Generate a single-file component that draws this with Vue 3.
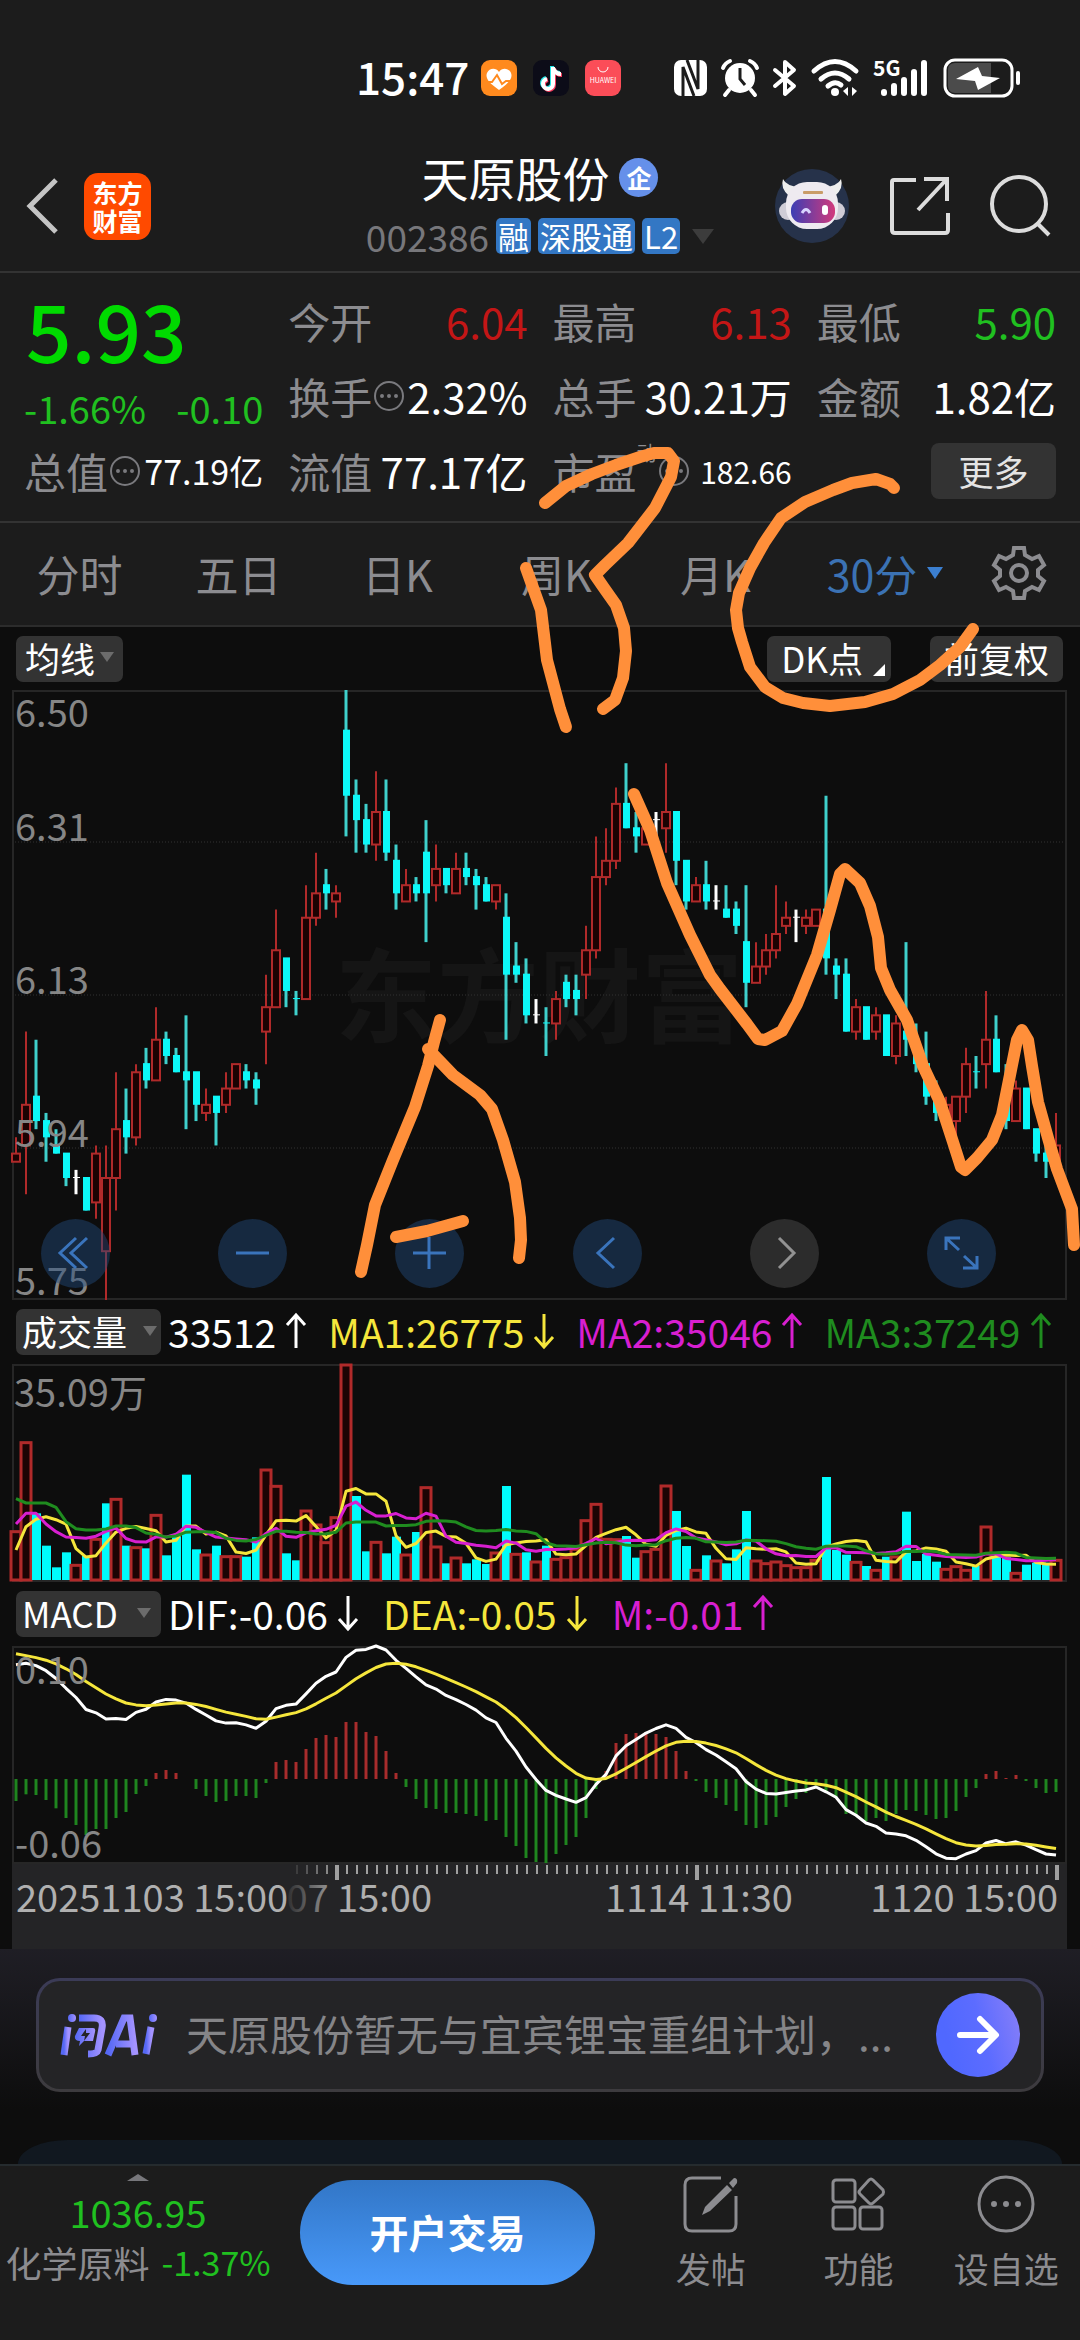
<script setup>
import { ref, computed } from 'vue'

const activeTab = ref('30分')
const tabs = ['分时', '五日', '日K', '周K', '月K', '30分']
const tags = ['融', '深股通', 'L2']

// x of a bar inside a plot
const barX = (i) => 4 + i * 10

// [kind, high, body top, body bottom, low], in cents below 6.50
// r = up, c = down, w = unchanged
const candles = [
    ['r', 55, 57, 58, 58], ['r', 42, 51, 56, 62], ['c', 43, 50, 53, 54], ['c', 52, 53, 55, 58], ['c', 54, 56, 57, 57],
    ['c', 57, 57, 60, 61], ['w', 59, 60, 60, 62], ['c', 60, 60, 64, 64], ['r', 56, 57, 63, 65], ['r', 56, 60, 69, 75],
    ['r', 47, 54, 60, 64], ['c', 49, 53, 55, 57], ['r', 46, 47, 55, 56], ['c', 44, 46, 48, 49], ['r', 39, 43, 48, 48],
    ['c', 42, 43, 45, 46], ['c', 44, 45, 47, 47], ['c', 40, 47, 48, 54], ['c', 47, 47, 51, 53], ['r', 49, 51, 52, 53],
    ['c', 50, 50, 52, 56], ['r', 47, 49, 51, 52], ['r', 46, 46, 49, 49], ['c', 46, 47, 48, 49], ['c', 47, 48, 49, 51],
    ['r', 35, 39, 42, 46], ['r', 27, 32, 39, 39], ['c', 33, 33, 37, 39], ['c', 37, 38, 38, 40], ['r', 24, 28, 38, 38],
    ['r', 20, 25, 28, 29], ['c', 22, 24, 25, 27], ['r', 24, 25, 26, 28], ['c', 0, 5, 13, 18], ['c', 11, 13, 16, 20],
    ['c', 14, 16, 19, 20], ['r', 10, 15, 19, 21], ['c', 11, 15, 20, 21], ['c', 19, 21, 25, 27], ['r', 22, 24, 26, 26],
    ['c', 23, 24, 25, 26], ['c', 16, 20, 25, 31], ['r', 19, 22, 24, 26], ['c', 22, 22, 24, 25], ['r', 20, 22, 25, 25],
    ['c', 20, 22, 23, 24], ['c', 22, 23, 24, 27], ['c', 23, 24, 26, 26], ['r', 24, 24, 26, 27], ['c', 25, 28, 35, 43],
    ['c', 31, 34, 35, 36], ['c', 33, 35, 40, 41], ['w', 38, 40, 40, 41], ['c', 39, 41, 41, 45], ['r', 37, 38, 41, 43],
    ['c', 35, 36, 38, 39], ['c', 35, 37, 38, 40], ['r', 29, 32, 35, 38], ['r', 18, 23, 32, 33], ['r', 17, 21, 23, 24],
    ['r', 12, 14, 21, 22], ['c', 9, 14, 17, 17], ['c', 15, 17, 18, 20], ['r', 16, 17, 19, 19], ['w', 15, 16, 16, 18],
    ['r', 9, 15, 17, 20], ['c', 15, 15, 21, 24], ['c', 21, 21, 26, 27], ['r', 23, 24, 26, 26], ['c', 21, 24, 26, 27],
    ['w', 24, 26, 26, 27], ['c', 24, 27, 28, 28], ['c', 26, 27, 29, 30], ['c', 24, 31, 36, 39], ['r', 31, 34, 36, 36],
    ['r', 30, 32, 34, 35], ['r', 24, 30, 32, 33], ['r', 26, 28, 29, 30], ['w', 27, 28, 28, 31], ['r', 27, 28, 29, 30],
    ['r', 27, 27, 29, 29], ['c', 13, 27, 33, 35], ['c', 33, 34, 35, 38], ['c', 33, 35, 42, 42], ['r', 38, 39, 42, 43],
    ['c', 39, 39, 43, 43], ['r', 39, 40, 42, 43], ['c', 40, 40, 45, 45], ['r', 40, 41, 45, 46], ['c', 31, 42, 43, 45],
    ['c', 41, 43, 46, 47], ['c', 42, 46, 50, 51], ['c', 48, 50, 52, 53], ['r', 50, 51, 53, 53], ['r', 50, 50, 53, 55],
    ['r', 44, 46, 50, 52], ['c', 45, 47, 47, 49], ['r', 37, 43, 46, 49], ['c', 40, 43, 47, 47], ['c', 46, 48, 53, 54],
    ['r', 48, 49, 53, 53], ['c', 49, 49, 54, 54], ['c', 54, 54, 57, 58], ['c', 56, 57, 58, 60], ['r', 52, 56, 58, 58]
]
const priceY = (cents) => cents * 610 / 75
const candleShapes = computed(() => candles.map(([kind, high, top, bottom, low], i) => ({
    kind,
    x: barX(i),
    high: priceY(high),
    top: priceY(top),
    bottom: priceY(bottom),
    low: priceY(low)
})))
const priceLabels = [
    { text: '6.50', y: 37 },
    { text: '6.31', y: 151 },
    { text: '6.13', y: 304 },
    { text: '5.94', y: 457 },
    { text: '5.75', y: 605 }
]

// volumes before the first visible bar, needed by the averages
const history = [675, 200, 103, 298, 943, 467, 152, 125, 170, 67, 95, 200, 423, 268, 244, 65, 90, 63, 84]
const volumes = [
    148, 415, 200, 103, 38, 83, 47, 72, 125, 230, 245, 103, 100, 95, 197, 74, 130, 316, 92, 78, 103,
    73, 73, 70, 128, 333, 284, 80, 59, 210, 168, 115, 190, 648, 252, 86, 116, 80, 130, 78, 144, 280,
    102, 50, 69, 50, 62, 48, 84, 282, 80, 83, 57, 103, 65, 70, 95, 181, 230, 125, 124, 132, 67, 88,
    95, 285, 207, 102, 32, 74, 60, 50, 92, 207, 60, 52, 57, 46, 40, 40, 62, 309, 90, 76, 56, 42, 32,
    70, 72, 205, 57, 78, 55, 35, 43, 32, 43, 162, 72, 68, 23, 46, 52, 52, 62
]
// one letter per bar, ten bars per group
const volumeKinds = [
    'rrccccrcrc', 'rcrcrccccr', 'crrccrrccr', 'rrrrccrccr', 'crrcrcccrc',
    'rcrcrrrrrr', 'rccrrrccrc', 'rcccrrrrrr', 'rcccrcrcrc', 'cccrrrcrcc', 'rcccr'
].join('')
const volumeBars = computed(() => volumes.map((v, i) => ({
    kind: volumeKinds[i],
    x: barX(i),
    h: v / 3
})))
const toLine = (values, toY) => values.map((v, i) => barX(i) + ',' + toY(v).toFixed(1)).join(' ')
const average = (days) => {
    const all = history.concat(volumes)
    const values = volumes.map((_, i) => {
        const end = i + history.length + 1
        return all.slice(end - days, end).reduce((sum, v) => sum + v, 0) / days
    })
    return toLine(values, (v) => 216 - v / 3)
}
const ma5 = average(5)
const ma10 = average(10)
const ma20 = average(20)

// MACD histogram, DIF and DEA follow from it
const macd = [
    -66, -46, -48, -63, -88, -117, -138, -168, -150, -150, -117, -99, -45, -21, 18, 27, 18, 0, -30, -51, -69,
    -66, -51, -51, -57, -12, 51, 57, 51, 90, 123, 132, 126, 171, 171, 141, 129, 84, 18, -24, -60, -87,
    -90, -102, -102, -105, -111, -126, -123, -174, -201, -237, -249, -252, -225, -198, -174, -117, -30, 24, 108, 135, 138,
    141, 135, 126, 84, 24, -6, -39, -57, -78, -96, -138, -147, -138, -114, -84, -60, -42, -20, -39, -57, -105,
    -111, -126, -117, -126, -105, -93, -96, -108, -120, -117, -96, -54, -27, 15, 24, 3, 12, -6, -27, -42, -39
]
const dea = []
macd.forEach((m, i) => dea.push(i ? dea[i - 1] + m / 8 : 376))
const dif = dea.map((d, i) => d + macd[i] / 2)
const macdY = (v) => 133 - v / 3
const difLine = toLine(dif, macdY)
const deaLine = toLine(dea, macdY)

const ticks = Array.from({ length: 77 }, (_, n) => n + 28)
const tickOpacity = (i) => Math.min(1, (i - 27) / 5)

const volumeStats = [
    { text: '33512', up: true, color: 'white' },
    { text: 'MA1:26775', up: false, color: 'yellow' },
    { text: 'MA2:35046', up: true, color: 'magenta' },
    { text: 'MA3:37249', up: true, color: 'green' }
]
const macdStats = [
    { text: 'DIF:-0.06', up: false, color: 'white' },
    { text: 'DEA:-0.05', up: false, color: 'yellow' },
    { text: 'M:-0.01', up: true, color: 'magenta' }
]

const controls = [
    { name: '最左', path: 'M35 19L19 34L35 49M46 19L30 34L46 49' },
    { name: '缩小', path: 'M18 34H51' },
    { name: '放大', path: 'M18 34H51M34 18V50' },
    { name: '左移', path: 'M41 19L25 34L41 49' },
    { name: '右移', path: 'M29 19L44 34L29 49', off: true },
    { name: '全屏', path: 'M19 31V19H33M19 19L32 31M50 37V49H36M50 49L37 37' }
]

// hand-drawn marks on top of the page
const marks = [
    '526,568 541,610 547,660 560,709 566,727',
    '545,503 566,486 592,474 616,465 640,457 654,453 668,453 674,461 671,477 655,508 628,543 605,565 595,575 604,588 616,605 624,628 626,651 623,678 615,700 603,709',
    '894,488 890,484 876,479 852,483 833,490 805,502 781,518 764,543 750,568 739,593 736,610 738,628 742,642 750,667 765,687 783,698 803,703 830,706 865,702 893,694 920,680 940,665 960,647 973,629',
    '440,1020 434,1042 428,1066 415,1107 393,1160 375,1205 367,1245 361,1272',
    '428,1049 453,1075 480,1095 492,1109 503,1140 515,1182 520,1218 521,1240 519,1258',
    '396,1237 427,1231 463,1221',
    '634,794 650,830 667,883 690,935 710,975 720,989 747,1024 758,1039 765,1040 782,1031 797,1004 817,955 830,910 840,874 845,869 860,883 870,906 878,937 881,968 890,990 907,1020 923,1066 940,1102 953,1142 961,1167 965,1170 977,1158 992,1140 1002,1115 1010,1075 1017,1040 1022,1030 1028,1040 1032,1066 1038,1102 1048,1138 1057,1169 1072,1209 1074,1245'
]
</script>

<template>
    <div class="page">
        <!-- Phone status bar -->
        <div class="status">
            <div class="status-left">
                <span class="clock">15:47</span>
                <svg width="36" height="36" viewBox="0 0 36 36">
                    <rect width="36" height="36" rx="9" fill="#ff8a1e" />
                    <path d="M18 30C8 23 4 18 6 13C8 8 15 7 18 12C21 7 28 8 30 13C32 18 28 23 18 30Z" fill="#fff" />
                    <path d="M3 22H11L16 15L21 24L25 21H33" fill="none" stroke="#ff8a1e" stroke-width="2" />
                </svg>
                <svg width="36" height="36" viewBox="0 0 36 36">
                    <rect width="36" height="36" rx="9" fill="#0c0c18" />
                    <g fill="none" stroke-width="4">
                        <path d="M19 6V23A5 5 0 1 1 13 18M19 7Q21 13 27 13" stroke="#25e5e8" />
                        <path d="M21 8V25A5 5 0 1 1 15 20M21 9Q23 15 29 15" stroke="#f53a5c" />
                        <path d="M20 7V24A5 5 0 1 1 14 19M20 8Q22 14 28 14" stroke="#fff" />
                    </g>
                </svg>
                <svg width="36" height="36" viewBox="0 0 36 36">
                    <rect width="36" height="36" rx="9" fill="#fb4d58" />
                    <path d="M13 7A5 5 0 0 0 23 7" fill="none" stroke="#fff" stroke-width="1" />
                    <text x="18" y="23" font-size="7" fill="#fff" text-anchor="middle">HUAWEI</text>
                </svg>
            </div>
            <div class="status-right">
                <svg width="33" height="36" viewBox="0 0 33 36">
                    <rect width="33" height="36" rx="7" fill="#fff" />
                    <path d="M9 36V7L20 36M24 0V29L13 0" fill="none" stroke="#1c1c1c" stroke-width="3" />
                </svg>
                <svg width="38" height="38" viewBox="0 0 38 38">
                    <circle cx="19" cy="19" r="15" fill="#fff" />
                    <path d="M19 9V20L24 26" fill="none" stroke="#1c1c1c" stroke-width="3" />
                    <path d="M2 9Q4 4 9 2M36 9Q34 4 29 2M8 31L4 36M30 31L34 36" fill="none" stroke="#fff" stroke-width="4" stroke-linecap="round" />
                </svg>
                <svg width="24" height="38" viewBox="0 0 24 38">
                    <path d="M2 11L21 27L12 35V3L21 11L2 27" fill="none" stroke="#fff" stroke-width="4" stroke-linejoin="round" stroke-linecap="round" />
                </svg>
                <svg width="48" height="38" viewBox="0 0 48 38">
                    <g fill="none" stroke="#fff" stroke-width="5" stroke-linecap="round">
                        <path d="M3 12Q24 -7 45 12" />
                        <path d="M10 20Q24 8 38 20" />
                        <path d="M17 27Q24 21 30 26" />
                    </g>
                    <circle cx="24" cy="33" r="4" fill="#fff" />
                    <path d="M37 28V37L32 32ZM41 37V28L46 32Z" fill="#fff" />
                </svg>
                <svg width="56" height="38" viewBox="0 0 56 38">
                    <text x="0" y="17" font-size="21" font-weight="700" fill="#fff">5G</text>
                    <path d="M11 33V34M21 27V34M31 21V34M41 13V34M51 4V34" stroke="#fff" stroke-width="6" stroke-linecap="round" />
                </svg>
                <svg width="78" height="40" viewBox="0 0 78 40">
                    <rect x="2" y="2" width="67" height="36" rx="10" fill="#1c1c1c" stroke="#fff" stroke-width="3" />
                    <path d="M12 5H48V35H12Q5 35 5 28V12Q5 5 12 5Z" fill="#4b4b4b" />
                    <path d="M35 9L13 21L32 23L35 32L57 20L39 18Z" fill="#fff" />
                    <path d="M75 15V25" stroke="#fff" stroke-width="4" stroke-linecap="round" />
                </svg>
            </div>
        </div>

        <!-- Stock title -->
        <header class="head">
            <div class="head-side">
                <button class="plain" aria-label="返回">
                    <svg width="36" height="58" viewBox="0 0 36 58">
                        <path d="M32 3L6 29L32 55" fill="none" stroke="#c4c4c4" stroke-width="5" />
                    </svg>
                </button>
                <div class="logo"><span>东方</span><span>财富</span></div>
            </div>
            <div class="head-mid">
                <h1>天原股份<span class="corp">企</span></h1>
                <div class="code-row">
                    <span class="code">002386</span>
                    <span v-for="tag in tags" :key="tag" class="tag">{{ tag }}</span>
                    <i class="caret dark"></i>
                </div>
            </div>
            <div class="head-side right">
                <button class="plain" aria-label="助手">
                    <svg width="76" height="76" viewBox="0 0 76 76">
                        <circle cx="38" cy="38" r="37" fill="#26324a" />
                        <path d="M9 11Q6 20 15 28L26 19Q12 18 9 11ZM67 11Q70 20 61 28L50 19Q64 18 67 11Z" fill="#eee" />
                        <circle cx="14" cy="43" r="9" fill="#cfccd6" />
                        <circle cx="62" cy="43" r="9" fill="#cfccd6" />
                        <rect x="12" y="14" width="52" height="47" rx="21" fill="#eeeaf0" />
                        <rect x="29" y="23" width="20" height="3" rx="1" fill="#c99c68" />
                        <defs>
                            <linearGradient id="visor"><stop stop-color="#3c3eb4" /><stop offset="1" stop-color="#d23a7c" /></linearGradient>
                        </defs>
                        <rect x="17" y="31" width="44" height="24" rx="11" fill="url(#visor)" />
                        <path d="M28 45Q32 38 36 45" fill="none" stroke="#d8d4ff" stroke-width="3" />
                        <rect x="48" y="37" width="6" height="10" rx="3" fill="#fff" />
                    </svg>
                </button>
                <button class="plain" aria-label="分享">
                    <svg width="60" height="60" viewBox="0 0 60 60">
                        <path d="M26 4H4Q2 4 2 6V54Q2 57 5 57H55Q58 57 58 54V37M34 3H57V25M56 4L28 34" fill="none" stroke="#dcdcdc" stroke-width="4" />
                    </svg>
                </button>
                <button class="plain" aria-label="搜索">
                    <svg width="62" height="62" viewBox="0 0 62 62">
                        <circle cx="29" cy="29" r="27" fill="none" stroke="#dcdcdc" stroke-width="4" />
                        <path d="M48 49L59 60" stroke="#dcdcdc" stroke-width="4" />
                    </svg>
                </button>
            </div>
        </header>

        <!-- Quote figures -->
        <section class="quote">
            <div class="quote-main">
                <strong class="price">5.93</strong>
                <div class="change"><span>-1.66%</span><span>-0.10</span></div>
            </div>
            <div class="cell"><span class="label">今开</span><b class="red">6.04</b></div>
            <div class="cell"><span class="label">最高</span><b class="red">6.13</b></div>
            <div class="cell"><span class="label">最低</span><b class="green">5.90</b></div>
            <div class="cell">
                <span class="label">换手<svg class="info" width="30" height="30" viewBox="0 0 30 30"><circle cx="15" cy="15" r="14" /><path d="M8 15H8M15 15H15M22 15H22" /></svg></span>
                <b>2.32%</b>
            </div>
            <div class="cell"><span class="label">总手</span><b>30.21万</b></div>
            <div class="cell"><span class="label">金额</span><b>1.82亿</b></div>
            <div class="cell">
                <span class="label">总值<svg class="info" width="30" height="30" viewBox="0 0 30 30"><circle cx="15" cy="15" r="14" /><path d="M8 15H8M15 15H15M22 15H22" /></svg></span>
                <b class="mid">77.19亿</b>
            </div>
            <div class="cell"><span class="label">流值</span><b>77.17亿</b></div>
            <div class="cell">
                <span class="label">市盈<sup>动</sup><svg class="info" width="30" height="30" viewBox="0 0 30 30"><circle cx="15" cy="15" r="14" /><path d="M8 15H8M15 15H15M22 15H22" /></svg></span>
                <b class="small">182.66</b>
            </div>
            <div class="cell end"><button class="more">更多</button></div>
        </section>

        <!-- Period tabs -->
        <nav class="tabs">
            <button
                v-for="tab in tabs"
                :key="tab"
                class="tab"
                :class="{ active: activeTab === tab }"
                @click="activeTab = tab"
            >{{ tab }}<i v-if="tab === '30分'" class="caret small-caret"></i></button>
            <button class="tab gear" aria-label="设置">
                <svg width="54" height="54" viewBox="0 0 54 54" fill="none" stroke="#8c8c90" stroke-width="4">
                    <path d="M22 2H32L33 9L40 13L47 10L52 19L46 24V30L52 35L47 44L40 41L33 45L32 52H22L21 45L14 41L7 44L2 35L8 30V24L2 19L7 10L14 13L21 9Z" />
                    <circle cx="27" cy="27" r="8" />
                </svg>
            </button>
        </nav>

        <main class="charts">
            <!-- Price -->
            <div class="bar">
                <label class="pill"><select aria-label="指标"><option>均线</option></select><i class="caret"></i></label>
                <div class="bar-right">
                    <button class="pill dk">DK点<i class="corner"></i></button>
                    <button class="pill fq">前复权</button>
                </div>
            </div>
            <div class="plot">
                <svg viewBox="0 0 1055 610">
                    <text x="527" y="345" class="watermark">东方财富</text>
                    <g class="grid">
                        <path d="M0 152H1055M0 305H1055M0 458H1055" />
                    </g>
                    <rect x="1" y="1" width="1053" height="608" class="frame" />
                    <g v-for="(k, i) in candleShapes" :key="i" :class="'candle-' + k.kind">
                        <template v-if="k.kind === 'r'">
                            <path :d="`M${k.x} ${k.high}V${k.top}M${k.x} ${k.bottom}V${k.low}`" />
                            <rect :x="k.x - 4" :y="k.top" width="8" :height="k.bottom - k.top" />
                        </template>
                        <template v-else>
                            <path :d="`M${k.x} ${k.high}V${k.low}`" />
                            <rect :x="k.x - 3" :y="k.top - 1" width="7" :height="k.bottom - k.top + 1" />
                        </template>
                    </g>
                    <text v-for="l in priceLabels" :key="l.text" x="3" :y="l.y" class="scale">{{ l.text }}</text>
                </svg>
                <div class="controls">
                    <button v-for="c in controls" :key="c.name" class="round" :class="{ off: c.off }" :aria-label="c.name">
                        <svg width="69" height="69" viewBox="0 0 69 69"><path :d="c.path" /></svg>
                    </button>
                </div>
            </div>

            <!-- Volume -->
            <div class="bar stats">
                <label class="pill"><select aria-label="副图一"><option>成交量</option></select><i class="caret wide"></i></label>
                <span v-for="s in volumeStats" :key="s.text" class="stat" :class="s.color">
                    {{ s.text }}
                    <svg width="20" height="36" viewBox="0 0 20 36"><path :d="s.up ? 'M10 35V2M1 12L10 2L19 12' : 'M10 1V34M1 24L10 34L19 24'" /></svg>
                </span>
            </div>
            <div class="plot">
                <svg viewBox="0 0 1055 218">
                    <rect x="1" y="1" width="1053" height="216" class="frame" />
                    <template v-for="(v, i) in volumeBars" :key="i">
                        <rect v-if="v.kind === 'r'" class="vol-r" :x="v.x - 5" :y="217 - v.h" width="10" :height="v.h - 1" />
                        <rect v-else class="vol-c" :x="v.x - 4" :y="216 - v.h" width="9" :height="v.h" />
                    </template>
                    <polyline :points="ma5" class="line yellow" />
                    <polyline :points="ma10" class="line magenta" />
                    <polyline :points="ma20" class="line green" />
                    <text x="2" y="43" class="scale">35.09万</text>
                </svg>
            </div>

            <!-- MACD -->
            <div class="bar stats macd-stats">
                <label class="pill"><select aria-label="副图二"><option>MACD</option></select><i class="caret wide"></i></label>
                <span v-for="s in macdStats" :key="s.text" class="stat" :class="s.color">
                    {{ s.text }}
                    <svg width="20" height="36" viewBox="0 0 20 36"><path :d="s.up ? 'M10 35V2M1 12L10 2L19 12' : 'M10 1V34M1 24L10 34L19 24'" /></svg>
                </span>
            </div>
            <div class="plot">
                <svg viewBox="0 0 1055 218">
                    <rect x="1" y="1" width="1053" height="216" class="frame" />
                    <path
                        v-for="(m, i) in macd"
                        :key="i"
                        :class="m > 0 ? 'hist-r' : 'hist-g'"
                        :d="`M${barX(i)} 133V${macdY(m)}`"
                    />
                    <polyline :points="difLine" class="line white" />
                    <polyline :points="deaLine" class="line yellow" />
                    <text x="3" y="38" class="scale">0.10</text>
                    <text x="3" y="212" class="scale">-0.06</text>
                </svg>
            </div>

            <!-- Time axis -->
            <div class="axis">
                <svg viewBox="0 0 1055 85">
                    <defs>
                        <linearGradient id="fade" gradientUnits="userSpaceOnUse" x1="270" x2="330" y1="0" y2="0">
                            <stop stop-color="#b0b0b0" stop-opacity="0" />
                            <stop offset="1" stop-color="#b0b0b0" />
                        </linearGradient>
                    </defs>
                    <path
                        v-for="i in ticks"
                        :key="i"
                        :d="`M${barX(i) + 1} 1V${i % 36 === 32 ? 16 : 10}`"
                        :opacity="tickOpacity(i)"
                        :stroke-width="i % 36 === 32 ? 4 : 2"
                        stroke="#a0a0a0"
                    />
                    <text x="4" y="48">20251103 15:00</text>
                    <text x="420" y="48" text-anchor="end" fill="url(#fade)">07 15:00</text>
                    <text x="687" y="48" text-anchor="middle">1114 11:30</text>
                    <text x="1046" y="48" text-anchor="end">1120 15:00</text>
                </svg>
            </div>
        </main>

        <!-- AI question -->
        <section class="ask-area">
            <div class="ask">
                <svg class="ask-logo" width="98" height="46" viewBox="0 0 98 46">
                    <defs>
                        <linearGradient id="ai"><stop stop-color="#5568f5" /><stop offset="1" stop-color="#a493ff" /></linearGradient>
                    </defs>
                    <g fill="none" stroke="url(#ai)" stroke-width="7">
                        <path d="M8 15L4 43" />
                        <path d="M19 6H34Q44 6 42 16L38 38Q37 42 28 42" />
                        <path d="M48 43L64 6H70L75 43M56 32H72" />
                        <path d="M91 15L86 42" />
                    </g>
                    <g fill="url(#ai)">
                        <circle cx="12" cy="6" r="4" />
                        <circle cx="93" cy="6" r="4" />
                        <path d="M19 16H33Q36 16 35 20L33 29H24L19 34L20 29Q14 29 15 24Z" />
                    </g>
                    <path d="M26 17L21 24H25L24 29L30 21H26Z" fill="#242426" />
                </svg>
                <p>天原股份暂无与宜宾锂宝重组计划，...</p>
                <button class="go" aria-label="提问">
                    <svg width="42" height="38" viewBox="0 0 42 38"><path d="M3 19H38M23 3L39 19L23 35" fill="none" stroke="#fff" stroke-width="6" stroke-linecap="round" stroke-linejoin="round" /></svg>
                </button>
            </div>
            <div class="next-card"></div>
        </section>

        <!-- Bottom bar -->
        <footer class="foot">
            <div class="sector">
                <i class="caret up"></i>
                <span class="index">1036.95</span>
                <div class="sector-row"><span>化学原料</span><span class="pct">-1.37%</span></div>
            </div>
            <button class="trade">开户交易</button>
            <div class="actions">
                <button class="action">
                    <svg width="56" height="58" viewBox="0 0 56 58">
                        <path d="M38 3H9Q2 3 2 10V49Q2 56 9 56H46Q53 56 53 49V21" fill="none" stroke="#8c8c90" stroke-width="3" />
                        <path d="M44 10L49 15L27 36L19 40L22 32ZM46 8L51 3Q55 3 54 8L50 13Z" fill="#8c8c90" />
                    </svg>
                    发帖
                </button>
                <button class="action">
                    <svg width="56" height="58" viewBox="0 0 56 58" fill="none" stroke="#8c8c90" stroke-width="3">
                        <rect x="3" y="5" width="22" height="22" rx="3" />
                        <rect x="3" y="32" width="22" height="22" rx="3" />
                        <rect x="30" y="32" width="22" height="22" rx="3" />
                        <path d="M39 5Q41 3 43 5L53 15Q54 17 53 19L43 28Q41 30 39 28L30 19Q28 17 30 15Z" />
                    </svg>
                    功能
                </button>
                <button class="action">
                    <svg width="58" height="58" viewBox="0 0 58 58">
                        <circle cx="29" cy="29" r="27" fill="none" stroke="#8c8c90" stroke-width="3" />
                        <path d="M17 29H17M29 29H29M41 29H41" stroke="#8c8c90" stroke-width="6" stroke-linecap="round" />
                    </svg>
                    设自选
                </button>
            </div>
        </footer>

        <svg class="marks" viewBox="0 0 1080 2340">
            <polyline v-for="m in marks" :key="m" :points="m" />
        </svg>
    </div>
</template>

<style>
body {
    background: #1c1c1c;
}
</style>

<style scoped>
.page {
    position: relative;
    overflow: hidden;
    background: #1c1c1c;
    color: #ffffff;
    font-family: "Noto Sans CJK SC", "Noto Sans", sans-serif;
}
.page svg {
    display: block;
    flex-shrink: 0;
    overflow: visible;
}
button, select {
    border: 0;
    padding: 0;
    background: none;
    color: inherit;
    font: inherit;
    appearance: none;
}
.caret {
    display: block;
    border: 7px solid transparent;
    border-top: 10px solid #6c6c6c;
    border-bottom: 0;
}

.status {
    display: flex;
    justify-content: space-between;
    align-items: center;
    height: 48px;
    padding: 54px 59px 42px 356px;
}
.status-left {
    display: flex;
    align-items: center;
    gap: 16px;
}
.clock {
    padding-bottom: 4px;
    font-size: 44px;
    line-height: 48px;
    font-weight: 500;
    margin-right: -4px;
}
.status-right {
    display: flex;
    align-items: center;
    gap: 14px;
}

.head {
    display: grid;
    grid-template-columns: 1fr auto 1fr;
    height: 127px;
    border-bottom: 2px solid #333333;
}
.head-side {
    display: flex;
    align-items: center;
    gap: 24px;
    padding: 0 24px;
    height: 124px;
}
.head-side.right {
    justify-content: flex-end;
    gap: 40px;
    padding-right: 28px;
}
.plain {
    display: block;
}
.logo {
    display: flex;
    flex-direction: column;
    justify-content: center;
    align-items: center;
    width: 67px;
    height: 67px;
    border-radius: 14px;
    background: #ff4a00;
    font-size: 25px;
    line-height: 28px;
    font-weight: 700;
}
.head-mid {
    display: flex;
    flex-direction: column;
    align-items: center;
    gap: 11px;
}
.head h1 {
    display: flex;
    align-items: center;
    gap: 10px;
    margin: 5px 0 0;
    font-size: 47px;
    line-height: 56px;
    font-weight: 400;
}
.corp {
    width: 39px;
    height: 39px;
    border-radius: 50%;
    background: #6590ea;
    font-size: 25px;
    line-height: 38px;
    font-weight: 700;
    text-align: center;
}
.code-row {
    display: flex;
    align-items: center;
    gap: 7px;
}
.code {
    font-size: 37px;
    line-height: 40px;
    color: #77777b;
}
.tag {
    padding: 0 2px;
    border-radius: 5px;
    background: #3377c4;
    font-size: 31px;
    line-height: 36px;
}
.caret.dark {
    margin-left: 5px;
    border-width: 15px 11px 0;
    border-top-color: #3c3c3c;
}

.quote {
    display: grid;
    grid-template-columns: repeat(4, 1fr);
    grid-template-rows: repeat(3, 75px);
    column-gap: 25px;
    padding: 10px 24px 13px;
    border-bottom: 2px solid #333333;
}
.quote-main {
    grid-row: span 2;
    display: flex;
    flex-direction: column;
}
.price {
    padding-left: 2px;
    font-size: 80px;
    line-height: 90px;
    font-weight: 500;
    color: #00da00;
}
.change {
    display: flex;
    justify-content: space-between;
    font-size: 38px;
    line-height: 70px;
    color: #20c020;
}
.cell {
    display: flex;
    justify-content: space-between;
    align-items: center;
    white-space: nowrap;
    font-size: 42px;
    line-height: 60px;
}
.label {
    display: flex;
    align-items: center;
    color: #8c8c90;
}
.label sup {
    align-self: flex-start;
    font-size: 20px;
    line-height: 24px;
}
.info {
    margin-left: 2px;
    fill: none;
    stroke: #7a7a7e;
    stroke-width: 2;
}
.info path {
    stroke-width: 4;
    stroke-linecap: round;
}
.cell b {
    font-weight: 400;
}
.cell .mid {
    font-size: 34px;
}
.cell .small {
    font-size: 30px;
}
.cell .red {
    color: #c41616;
}
.cell .green {
    color: #20c020;
}
.cell.end {
    justify-content: flex-end;
}
.more {
    width: 125px;
    border-radius: 8px;
    background: #333333;
    color: #e4e4e4;
    font-size: 35px;
    line-height: 56px;
}

.tabs {
    display: grid;
    grid-template-columns: repeat(5, 159fr) 180fr 105fr;
    height: 102px;
    border-bottom: 2px solid #2c2c2c;
}
.tab {
    display: flex;
    justify-content: center;
    align-items: center;
    gap: 10px;
    padding-bottom: 3px;
    color: #8c8c90;
    font-size: 43px;
}
.tab.active {
    color: #3b72b4;
}
.gear {
    padding-right: 18px;
}
.small-caret {
    border-width: 12px 8px 0;
    border-top-color: #3b7fd0;
}

.charts {
    padding: 0 13px 0 12px;
    background: #0d0d0d;
}
.bar {
    display: flex;
    align-items: center;
    justify-content: space-between;
    height: 63px;
    padding: 0 4px;
}
.bar-right {
    display: flex;
    gap: 39px;
}
.pill {
    display: flex;
    align-items: center;
    gap: 4px;
    height: 43px;
    padding: 0 9px 3px;
    border-radius: 7px;
    background: #333333;
    font-size: 35px;
    line-height: 43px;
}
.pill.dk {
    gap: 10px;
    padding: 0 6px 3px 14px;
    height: 46px;
}
.pill.fq {
    padding: 0 14px 3px;
    height: 46px;
}
.pill select {
    line-height: 43px;
}
.corner {
    align-self: flex-end;
    margin-bottom: 3px;
    border-left: 12px solid transparent;
    border-bottom: 12px solid #ffffff;
}
.stats {
    justify-content: flex-start;
    gap: 7px;
    height: 64px;
}
.stats .pill {
    justify-content: space-between;
    min-width: 129px;
    padding: 0 10px 3px 6px;
    gap: 15px;
}
.stat {
    display: flex;
    align-items: center;
    gap: 10px;
    margin-right: 15px;
    padding-bottom: 3px;
    font-size: 39px;
    line-height: 46px;
    white-space: nowrap;
}
.macd-stats .stat {
    margin-right: 18px;
}
.stat svg {
    fill: none;
    stroke: currentColor;
    stroke-width: 3;
}
.white { color: #ffffff; stroke: #ffffff; }
.yellow { color: #f5e63c; stroke: #f5e63c; }
.magenta { color: #d81fd0; stroke: #d81fd0; }
.green { color: #1f8c1f; stroke: #1f8c1f; }
.stat.white, .stat.yellow, .stat.magenta, .stat.green {
    stroke: none;
}

.plot {
    position: relative;
}
.plot > svg, .axis > svg {
    width: 100%;
    height: auto;
}
.frame {
    fill: none;
    stroke: #262626;
    stroke-width: 2;
}
.grid path {
    stroke: #333333;
    stroke-dasharray: 1 2;
}
.watermark {
    font-size: 102px;
    font-weight: 700;
    fill: #151515;
    text-anchor: middle;
}
.scale {
    font-size: 38px;
    fill: #868686;
}
.candle-r {
    stroke: #b02a2a;
    stroke-width: 2;
    fill: #1c0202;
}
.candle-c path {
    stroke: #3fd0cc;
    stroke-width: 3;
}
.candle-c rect {
    fill: #0cf8f8;
}
.candle-w path {
    stroke: #ffffff;
    stroke-width: 3;
}
.candle-w rect {
    fill: #ffffff;
}
.vol-r {
    fill: #1c0404;
    stroke: #b02a2a;
    stroke-width: 3;
}
.vol-c {
    fill: #00fcfc;
}
.line {
    fill: none;
    stroke-width: 3;
    stroke-linejoin: round;
}
.hist-r {
    stroke: #a82c2c;
    stroke-width: 3;
}
.hist-g {
    stroke: #1f851f;
    stroke-width: 3;
}
.controls {
    position: absolute;
    bottom: 12px;
    left: 29px;
    right: 71px;
    display: flex;
    justify-content: space-between;
}
.round {
    border-radius: 50%;
    background: rgba(34, 76, 126, 0.45);
}
.round path {
    fill: none;
    stroke: #3a74bc;
    stroke-width: 3;
}
.round.off {
    background: #2c2c2c;
}
.round.off path {
    stroke: #929292;
}
.axis {
    background: #242426;
}
.axis text {
    font-size: 38px;
    fill: #b0b0b0;
}
.axis text[fill] {
    fill: url(#fade);
}

.ask-area {
    padding: 29px 18px 0;
    background: linear-gradient(#1f1e25, #0d0d0d 160px);
}
.ask {
    display: flex;
    align-items: center;
    margin: 0 18px 48px;
    height: 108px;
    padding: 0 21px;
    border: 3px solid transparent;
    border-radius: 24px;
    background:
        linear-gradient(#242426, #242426) padding-box,
        linear-gradient(#3b3b57, #3d3b3e) border-box;
}
.ask p {
    flex: 1;
    margin: 0 0 0 28px;
    padding-bottom: 4px;
    overflow: hidden;
    color: #858588;
    font-size: 42px;
    line-height: 60px;
    white-space: nowrap;
}
.go {
    display: flex;
    justify-content: center;
    align-items: center;
    width: 84px;
    height: 84px;
    border-radius: 50%;
    background: linear-gradient(75deg, #5068ff 20%, #5c6cff 55%, #8a80f8);
}
.next-card {
    height: 24px;
    border-radius: 50px 50px 0 0 / 24px 24px 0 0;
    background: #111820;
}

.foot {
    display: flex;
    align-items: flex-start;
    height: 174px;
    border-top: 2px solid #252b2e;
    background: #1c1c1c;
}
.sector {
    display: flex;
    flex-direction: column;
    align-items: center;
    width: 276px;
    padding-top: 8px;
}
.caret.up {
    border-width: 0 11px 7px;
    border-bottom: 7px solid #77777b;
}
.index {
    margin-top: 6px;
    font-size: 38px;
    line-height: 50px;
    color: #20c020;
}
.sector-row {
    display: flex;
    align-items: center;
    gap: 12px;
    white-space: nowrap;
    font-size: 36px;
    line-height: 50px;
    color: #8c8c90;
}
.pct {
    font-size: 34px;
    color: #20c020;
}
.trade {
    width: 295px;
    height: 105px;
    margin: 14px 0 0 24px;
    padding-bottom: 4px;
    border-radius: 53px;
    background: linear-gradient(#3276c6, #4899fa);
    font-size: 39px;
    font-weight: 700;
}
.actions {
    flex: 1;
    display: grid;
    grid-template-columns: repeat(3, 1fr);
    padding: 9px 0 0 42px;
}
.action {
    display: flex;
    flex-direction: column;
    align-items: center;
    gap: 9px;
    color: #8c8c90;
    font-size: 35px;
    line-height: 52px;
}

.marks {
    position: absolute;
    top: 0;
    left: 0;
    width: 100%;
    pointer-events: none;
    fill: none;
    stroke: #ff8f3a;
    stroke-width: 12;
    stroke-linecap: round;
    stroke-linejoin: round;
}
</style>
